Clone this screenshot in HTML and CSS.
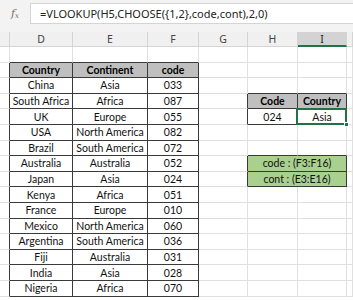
FILE: index.html
```html
<!DOCTYPE html>
<html>
<head>
    <title>VLOOKUP with CHOOSE</title>
    <link rel="stylesheet" href="styles.css">
</head>
<body>
    <div class="formula-bar">
        <div class="fx">f<span>x</span></div>
        <div class="formula">=VLOOKUP(H5,CHOOSE({1,2},code,cont),2,0)</div>
    </div>

    <div class="sheet" id="sheet"></div>

    <script>
        const colNames = ["", "D", "E", "F", "G", "H", "I", ""];

        const countries = [
            ["China", "Asia", "033"],
            ["South Africa", "Africa", "087"],
            ["UK", "Europe", "055"],
            ["USA", "North America", "082"],
            ["Brazil", "South America", "072"],
            ["Australia", "Australia", "052"],
            ["Japan", "Asia", "024"],
            ["Kenya", "Africa", "051"],
            ["France", "Europe", "010"],
            ["Mexico", "North America", "060"],
            ["Argentina", "South America", "036"],
            ["Fiji", "Australia", "031"],
            ["India", "Asia", "028"],
            ["Nigeria", "Africa", "070"]
        ];

        // boxes with dark borders: rows r1..r2, columns c1..c2 (grid indexes)
        const boxes = [
            { r1: 2, r2: 16, c1: 1, c2: 3 },
            { r1: 4, r2: 5, c1: 5, c2: 6 },
            { r1: 8, r2: 9, c1: 5, c2: 6 }
        ];

        const content = {};
        content["2,1"] = { text: "Country", cls: "th" };
        content["2,2"] = { text: "Continent", cls: "th" };
        content["2,3"] = { text: "code", cls: "th" };
        countries.forEach((row, i) => {
            row.forEach((val, j) => {
                content[(i + 3) + "," + (j + 1)] = { text: val, cls: "" };
            });
        });
        content["4,5"] = { text: "Code", cls: "th" };
        content["4,6"] = { text: "Country", cls: "th" };
        content["5,5"] = { text: "024", cls: "" };
        content["5,6"] = { text: "Asia", cls: "selected" };
        content["8,5"] = { text: "code : (F3:F16)", cls: "named", span: 2 };
        content["9,5"] = { text: "cont : (E3:E16)", cls: "named", span: 2 };

        function inBox(r, c) {
            return boxes.some(b => r >= b.r1 && r <= b.r2 && c >= b.c1 && c <= b.c2);
        }

        const sheet = document.getElementById("sheet");

        for (let r = 0; r <= 16; r++) {
            for (let c = 0; c < colNames.length; c++) {
                const cell = document.createElement("div");
                cell.className = "cell";

                if (r === 0) {
                    cell.classList.add("col-head");
                    if (colNames[c] === "I") cell.classList.add("active");
                    cell.textContent = colNames[c];
                    sheet.appendChild(cell);
                    continue;
                }

                const item = content[r + "," + c];
                if (item) {
                    cell.textContent = item.text;
                    if (item.cls) cell.classList.add(item.cls);
                    if (item.span) {
                        cell.style.gridColumn = "span " + item.span;
                    }
                }

                if (inBox(r, c)) {
                    cell.classList.add("dark-right", "dark-bottom");
                }
                if (inBox(r, c + 1) && !inBox(r, c)) cell.classList.add("dark-right");
                if (inBox(r + 1, c) && !inBox(r, c)) cell.classList.add("dark-bottom");

                sheet.appendChild(cell);

                if (item && item.span) c += item.span - 1;
            }
        }
    </script>
</body>
</html>
```

FILE: styles.css
```css
/* Reset */
body {
    margin: 0;
    background-color: #ffffff;
    font-family: Lato, "Liberation Sans", sans-serif;
    overflow: hidden;
}

/* Formula bar */
.formula-bar {
    height: 32px;
    box-sizing: border-box;
    padding-top: 3px;
    background-color: #f3f3f3;
    display: flex;
    align-items: flex-start;
}

.fx {
    width: 30px;
    height: 21px;
    display: flex;
    align-items: center;
    justify-content: center;
    color: #707070;
    font-family: "DejaVu Serif", serif;
    font-style: italic;
    font-size: 11px;
}

.fx span {
    font-size: 7px;
    margin-top: 4px;
}

.formula {
    flex: 1;
    height: 21px;
    box-sizing: border-box;
    padding-left: 9px;
    background-color: #ffffff;
    border: 1px solid #d4d4d4;
    border-right: none;
    color: #222222;
    font-family: "Noto Sans", sans-serif;
    font-size: 11px;
    line-height: 19px;
    white-space: nowrap;
}

/* Sheet grid */
.sheet {
    display: grid;
    grid-template-columns: 10px 63px 75px 51px 49px 50px 49px 6px;
    grid-template-rows: 15px repeat(16, 15.6px);
}

.cell {
    box-sizing: border-box;
    border-right: 1px solid #e0e0e0;
    border-bottom: 1px solid #e0e0e0;
    display: flex;
    align-items: center;
    justify-content: center;
    font-size: 10.5px;
    color: #111111;
    white-space: nowrap;
    overflow: hidden;
    position: relative;
}

/* Column headers */
.col-head {
    background-color: #f0f0f0;
    border-right-color: #d4d4d4;
    border-bottom-color: #d4d4d4;
    color: #444444;
    font-family: "Noto Sans", sans-serif;
    font-size: 10.5px;
}

.col-head.active {
    background-color: #d3d3d3;
    color: #222222;
    border-bottom: 2px solid #217346;
}

/* Table borders */
.dark-right {
    border-right-color: #3a3a3a;
}

.dark-bottom {
    border-bottom-color: #3a3a3a;
}

.th {
    background-color: #bfbfbf;
    font-weight: bold;
    color: #000000;
}

.named {
    background-color: #a9d08e;
    color: #111111;
}

/* Active cell */
.selected {
    overflow: visible;
}

.selected::after {
    content: "";
    position: absolute;
    left: -2px;
    top: -1px;
    right: -1px;
    bottom: -1px;
    border: 2px solid #217346;
}

.selected::before {
    content: "";
    position: absolute;
    right: -3px;
    bottom: -3px;
    width: 5px;
    height: 5px;
    background-color: #217346;
    border: 1px solid #ffffff;
    box-sizing: border-box;
    z-index: 1;
}
```
